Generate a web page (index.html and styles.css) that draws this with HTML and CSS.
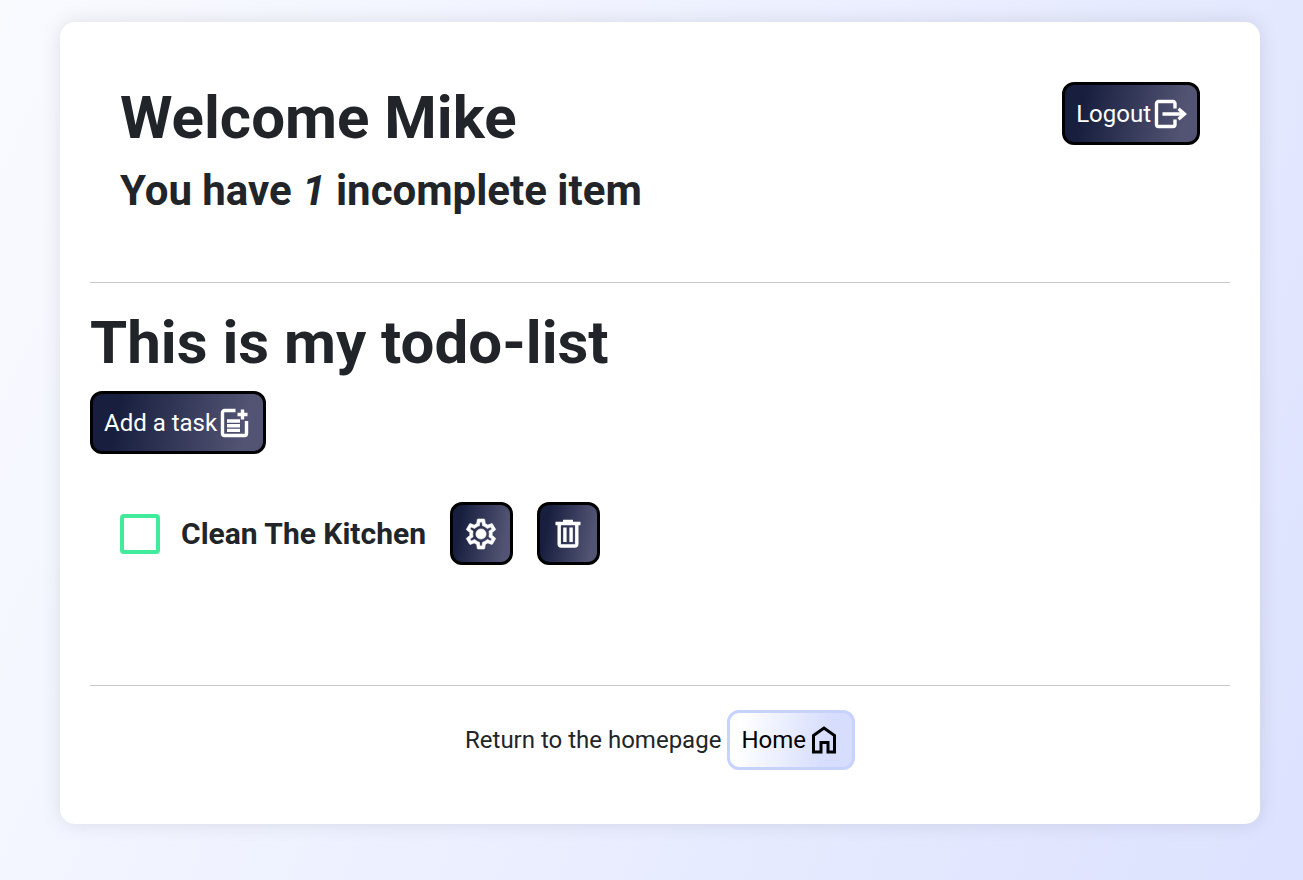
FILE: index.html
```html
<!DOCTYPE html>
<html lang="en">
<head>
<meta charset="utf-8">
<meta name="viewport" content="width=device-width, initial-scale=1">
<title>Todo list</title>
<link rel="stylesheet" href="styles.css">
</head>
<body>
<main class="card">
  <header class="welcome">
    <div>
      <h1 class="title">Welcome Mike</h1>
      <h2 class="subtitle">You have <em>1</em> incomplete item</h2>
    </div>
    <button class="btn btn-dark" type="button">Logout<svg class="icon" viewBox="0 0 36 36" fill="none" stroke="currentColor" stroke-width="3.4" aria-hidden="true"><path d="M24 12.500V7.500a2 2 0 0 0-2-2H7.500a2 2 0 0 0-2 2v21a2 2 0 0 0 2 2H22a2 2 0 0 0 2-2V23.500M11.500 18H31"/><path stroke="none" fill="currentColor" d="M28.500 11.500 36 18l-7.500 6.500-2-2.400L30.500 18l-4-4.100z"/></svg></button>
  </header>
  <hr class="rule">
  <section>
    <h1 class="title">This is my todo-list</h1>
    <button class="btn btn-dark" type="button">Add a task<svg class="icon" viewBox="0 0 36 36" fill="none" stroke="currentColor" stroke-width="3.4" aria-hidden="true"><path d="M18.500 5.500H7.500A2 2 0 0 0 5.500 7.500v21a2 2 0 0 0 2 2h20a2 2 0 0 0 2-2V16M10 16h13M10 20.700h13M10 25.400h13M25.500 4.500v10M20.500 9.500h10"/></svg></button>
    <ul class="tasks">
      <li class="task">
        <input class="check" type="checkbox" id="task-1">
        <label class="task-name" for="task-1">Clean The Kitchen</label>
        <div class="actions">
          <button class="btn btn-dark btn-square" type="button" aria-label="Edit task"><svg class="icon" viewBox="0 0 24 24" fill="currentColor" stroke="currentColor" stroke-width=".4" aria-hidden="true"><path d="M19.430 12.980c.04-.32.07-.64.07-.98s-.03-.66-.07-.98l2.110-1.650c.19-.15.24-.42.12-.64l-2-3.460c-.09-.16-.26-.25-.44-.25-.06 0-.12.01-.17.03l-2.490 1c-.52-.4-1.080-.73-1.690-.98l-.38-2.650C14.460 2.180 14.250 2 14 2h-4c-.25 0-.46.18-.49.42l-.38 2.650c-.61.25-1.170.59-1.690.98l-2.490-1c-.06-.02-.12-.03-.18-.03-.17 0-.34.09-.43.25l-2 3.460c-.13.22-.07.49.12.64l2.110 1.650c-.04.32-.07.65-.07.98s.03.66.07.98l-2.110 1.650c-.19.15-.24.42-.12.64l2 3.460c.09.16.26.25.44.25.06 0 .12-.01.17-.03l2.490-1c.52.4 1.080.73 1.690.98l.38 2.650c.03.24.24.42.49.42h4c.25 0 .46-.18.49-.42l.38-2.650c.61-.25 1.170-.59 1.690-.98l2.490 1c.06.02.12.03.18.03.17 0 .34-.09.43-.25l2-3.460c.12-.22.07-.49-.12-.64l-2.110-1.650zm-1.980-1.710c.04.31.05.52.05.73 0 .21-.02.43-.05.73l-.14 1.130.89.7 1.080.84-.7 1.210-1.270-.51-1.040-.42-.9.68c-.43.32-.84.56-1.250.73l-1.060.43-.16 1.130-.2 1.350h-1.400l-.19-1.350-.16-1.130-1.060-.43c-.43-.18-.83-.41-1.230-.71l-.91-.7-1.060.43-1.270.51-.7-1.210 1.080-.84.89-.7-.14-1.130c-.03-.31-.05-.54-.05-.74s.02-.43.05-.73l.14-1.130-.89-.7-1.080-.84.7-1.210 1.270.51 1.040.42.9-.68c.43-.32.84-.56 1.250-.73l1.060-.43.16-1.130.2-1.350h1.390l.19 1.350.16 1.130 1.060.43c.43.18.83.41 1.230.71l.91.7 1.060-.43 1.270-.51.7 1.210-1.070.85-.89.7.14 1.130z"/><circle cx="12" cy="12" r="3.4"/></svg></button>
          <button class="btn btn-dark btn-square" type="button" aria-label="Delete task"><svg class="icon" viewBox="0 0 36 36" fill="none" stroke="currentColor" stroke-width="3.4" aria-hidden="true"><path d="M5.500 7.500h25M13 5.500h10M9.200 8v20a2 2 0 0 0 2 2h13.600a2 2 0 0 0 2-2V8M14.900 11.500v14.500M21.100 11.500v14.500"/></svg></button>
        </div>
      </li>
    </ul>
  </section>
  <hr class="rule">
  <footer class="footer">
    <span>Return to the homepage</span>
    <a class="btn btn-light" href="#">Home<svg class="icon" viewBox="0 0 36 36" fill="none" stroke="currentColor" stroke-width="3" aria-hidden="true"><path d="M7.500 13.500 18 6l10.500 7.500v16.500h-6.500v-9.500h-7v9.500h-7.500z"/></svg></a>
  </footer>
</main>
</body>
</html>
```
FILE: styles.css
```css
* {
  box-sizing: border-box;
}

body {
  margin: 0;
  min-height: 100vh;
  padding: 22px 43px 56px 60px;
  background: linear-gradient(115deg, #f9fafe, #f3f6ff 25%, #dde2fe 97%);
  color: #212529;
  font: 400 24px/36px Roboto, sans-serif;
}

.card {
  padding: 30px;
  border-radius: 15px;
  background: #fff;
  box-shadow: 0 0 20px rgba(0, 0, 0, 0.1);
}

.welcome {
  display: flex;
  justify-content: space-between;
  align-items: flex-start;
  padding: 30px;
}

.title,
.subtitle {
  margin: 0 0 12px;
  font-weight: 700;
}

.title {
  font-size: 60px;
  line-height: 72px;
}

.subtitle {
  font-size: 42px;
  line-height: 50px;
}

.rule {
  height: 1px;
  margin: 24px 0;
  border: 0;
  background: #c8c9ca;
}

.btn {
  display: inline-flex;
  align-items: center;
  justify-content: center;
  padding: 9px 10px 9px 11px;
  border: 3px solid;
  border-radius: 12px;
  font: inherit;
  text-decoration: none;
  cursor: pointer;
}

.btn-dark {
  min-height: 63px;
  border-color: #000;
  background: linear-gradient(100deg, #181f3e 15%, #535474 88%);
  color: #fff;
}

.btn-square {
  width: 63px;
  padding: 9px;
}

.btn-light {
  border-color: #c8d2ff;
  background: linear-gradient(100deg, #fff 10%, #d6ddfd 78%);
  color: #000;
}

.icon {
  flex: none;
  width: 36px;
  height: 36px;
}

.tasks {
  margin: 0;
  padding: 48px 30px 96px;
  list-style: none;
}

.task {
  display: flex;
  align-items: center;
}

.check {
  appearance: none;
  width: 40px;
  height: 40px;
  margin: 0 21px 0 0;
  border: 4px solid #40eb9b;
  border-radius: 4px;
  background: #fff;
}

.task-name {
  font-size: 30px;
  font-weight: 700;
}

.actions {
  display: flex;
  gap: 24px;
  margin-left: 24px;
}

.footer {
  display: flex;
  align-items: center;
  justify-content: center;
  gap: 6px;
  padding-bottom: 24px;
}
```
